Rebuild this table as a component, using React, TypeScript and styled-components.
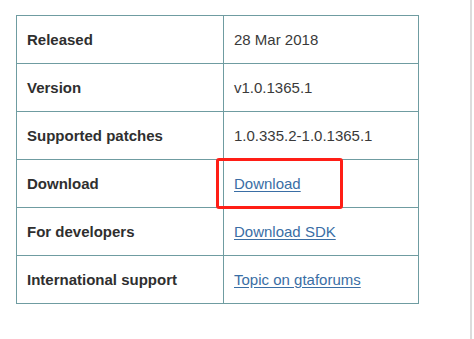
import React from "react";
import styled, { createGlobalStyle } from "styled-components";

const Global = createGlobalStyle`
  html, body { margin: 0; padding: 0; background: #fff; }
  body { font-family: "Liberation Sans", Arial, sans-serif; }
`;

const Page = styled.div`
  display: flex;
  width: 474px;
  height: 339px;
  background: #fff;
`;

const Content = styled.div`
  flex: 1;
  padding: 15px 0 0 16px;
`;

const Strip = styled.div`
  width: 2px;
  height: 339px;
  background: #dcdcdc;
  margin-right: 2px;
`;

const Table = styled.table`
  border-collapse: collapse;
  width: 403px;
  table-layout: fixed;
`;

const Row = styled.tr`
  height: 48px;
`;

const Cell = styled.td<{ $label?: boolean }>`
  border: 1px solid #6f9ca1;
  padding: 0 10px;
  font-size: 15px;
  line-height: 18px;
  vertical-align: middle;
  color: ${(p) => (p.$label ? "#2f2f2f" : "#3a3a3a")};
  font-weight: ${(p) => (p.$label ? 700 : 400)};
  width: ${(p) => (p.$label ? "186px" : "auto")};
  position: relative;
`;

const Link = styled.a`
  color: #3a6ea5;
  text-decoration: underline;
  text-underline-offset: 2px;
`;

const Highlight = styled.div`
  position: absolute;
  left: -8px;
  top: -2px;
  width: 121px;
  height: 45px;
  border: 3px solid #ff1e16;
  border-radius: 3px;
  pointer-events: none;
`;

const rows: { label: string; value: string; link?: boolean; highlight?: boolean }[] = [
  { label: "Released", value: "28 Mar 2018" },
  { label: "Version", value: "v1.0.1365.1" },
  { label: "Supported patches", value: "1.0.335.2-1.0.1365.1" },
  { label: "Download", value: "Download", link: true, highlight: true },
  { label: "For developers", value: "Download SDK", link: true },
  { label: "International support", value: "Topic on gtaforums", link: true },
];

export default function App() {
  return (
    <Page>
      <Global />
      <Content>
        <Table>
          <tbody>
            {rows.map((r) => (
              <Row key={r.label}>
                <Cell $label>{r.label}</Cell>
                <Cell>
                  {r.link ? <Link href="#">{r.value}</Link> : r.value}
                  {r.highlight && <Highlight />}
                </Cell>
              </Row>
            ))}
          </tbody>
        </Table>
      </Content>
      <Strip />
    </Page>
  );
}
